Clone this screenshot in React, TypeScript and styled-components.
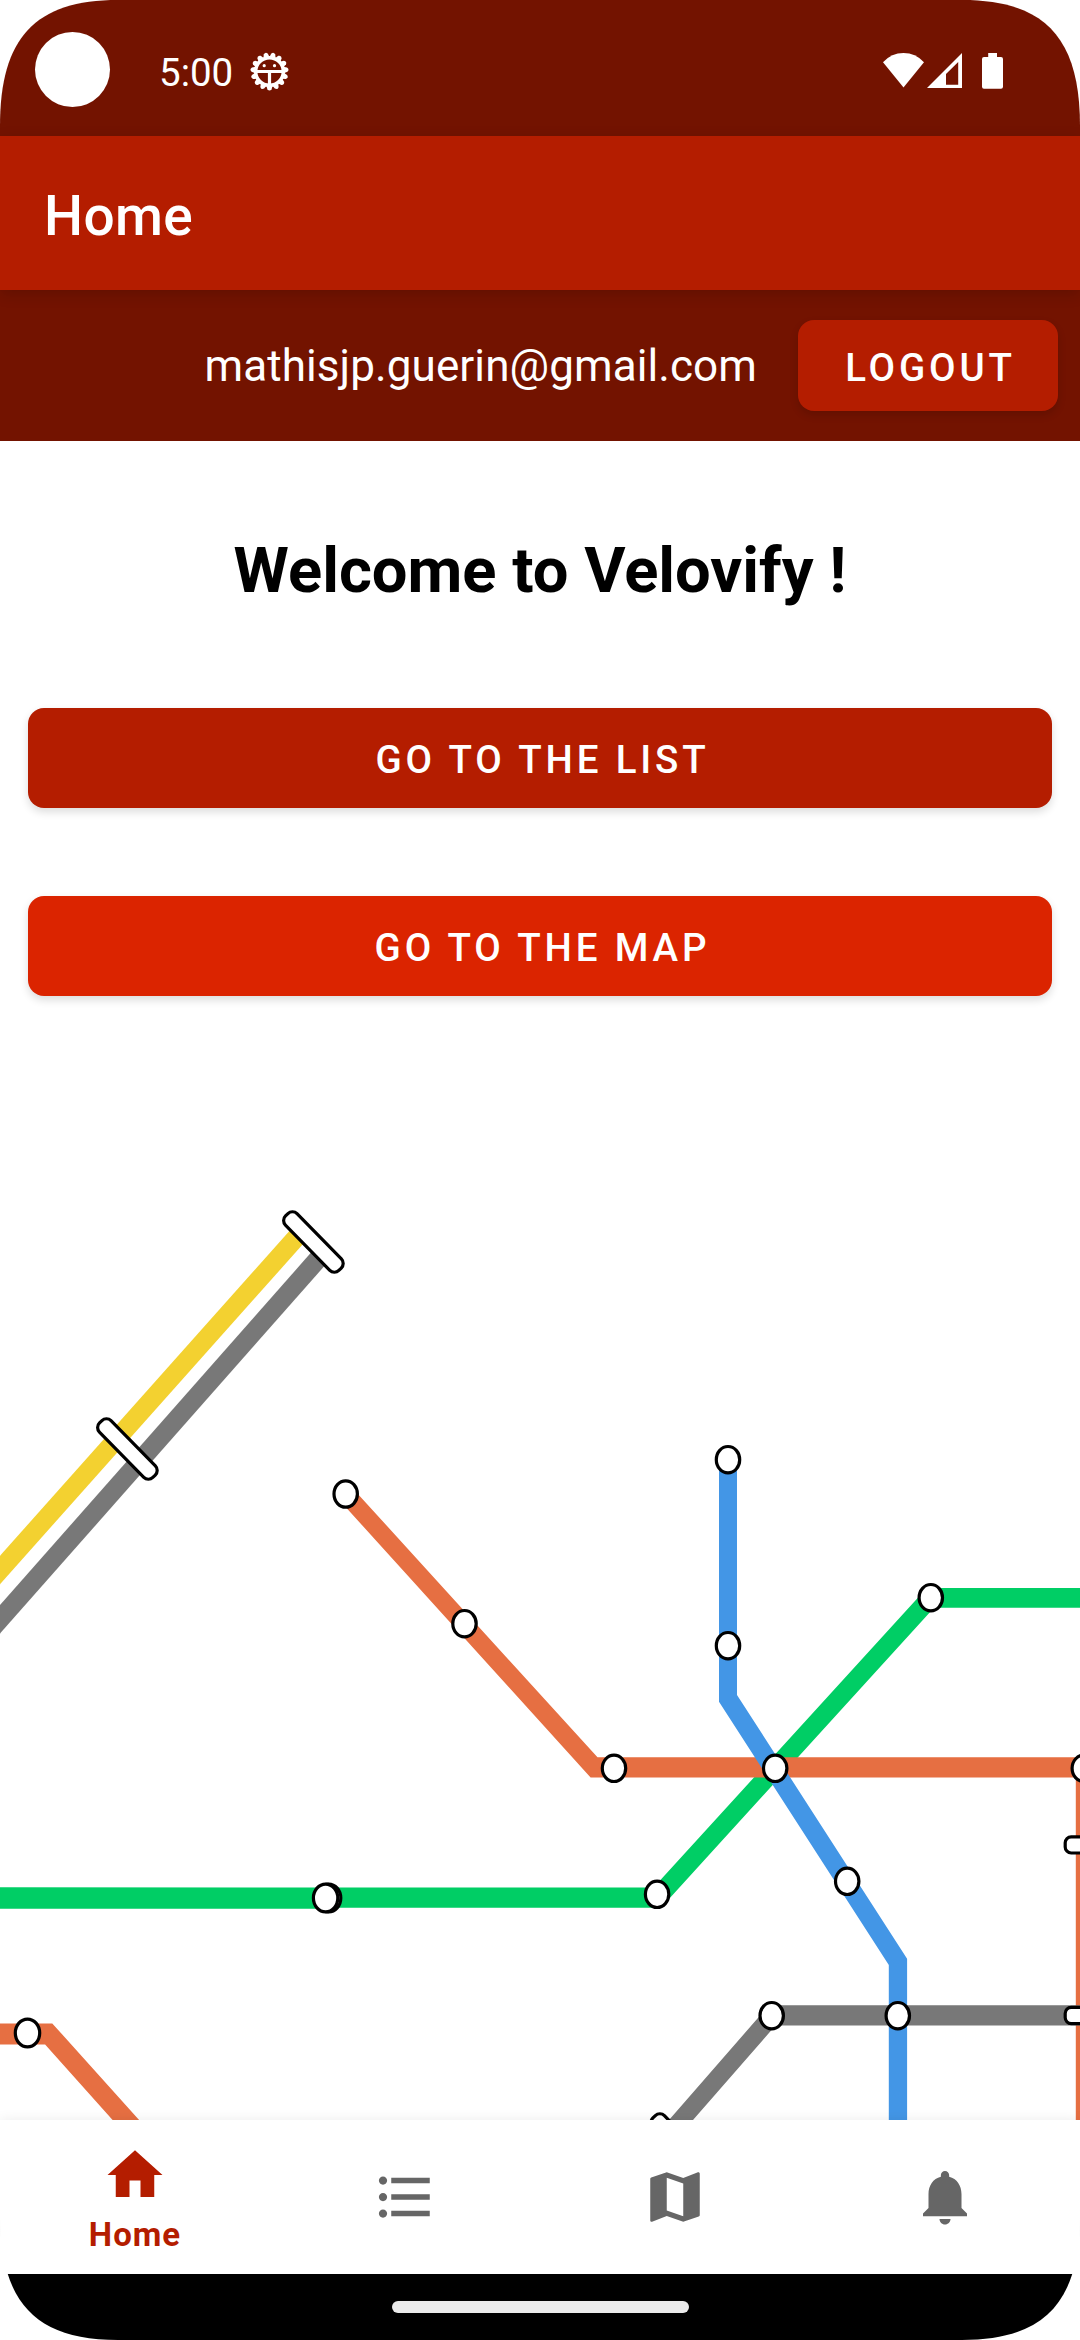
import React from "react";
import styled, { createGlobalStyle } from "styled-components";
import { MdFormatListBulleted, MdHome, MdMap } from "react-icons/md";

const GlobalStyle = createGlobalStyle`
  * { box-sizing: border-box; }
  body { margin: 0; background: #fff; font-family: Roboto, "Liberation Sans", sans-serif; }
`;

const colors = { primary: "#b41d00", dark: "#731300", bright: "#db2400", muted: "#666666" };

const Screen = styled.div`
  width: 1080px;
  height: 2340px;
  display: flex;
  flex-direction: column;
  overflow: hidden;
  background: #fff;
  clip-path: path("M118 0C35 0 0 38 0 126V2214C0 2302 35 2340 118 2340H962C1045 2340 1080 2302 1080 2214V126C1080 38 1045 0 962 0Z");
`;

const StatusBar = styled.header`
  height: 136px;
  flex: none;
  display: flex;
  align-items: flex-start;
  padding: 32px 77px 0 35px;
  background: ${colors.dark};
  color: #fff;
`;

const Camera = styled.div`
  width: 75px;
  height: 75px;
  border-radius: 50%;
  background: #fff;
`;

const Clock = styled.time`
  margin: 17px 0 0 49px;
  width: 91px;
  font-size: 38.5px;
  line-height: 48px;
`;

const StatusIcon = styled.svg<{ $gap: number; $top: number }>`
  flex: none;
  margin: ${(p) => p.$top}px 0 0 ${(p) => p.$gap}px;
`;

const StatusIcons = styled.div`
  margin-left: auto;
  display: flex;
`;

const AppBar = styled.div`
  height: 154px;
  flex: none;
  display: flex;
  align-items: center;
  padding: 6px 44px 0;
  background: ${colors.primary};
  position: relative;
  z-index: 1;
  box-shadow: 0 4px 14px rgba(0, 0, 0, 0.16);
`;

const Title = styled.h1`
  margin: 0;
  color: #fff;
  font-size: 55px;
  font-weight: 500;
  line-height: 64px;
  letter-spacing: 0.4px;
`;

const AccountBar = styled.div`
  height: 151px;
  flex: none;
  display: flex;
  align-items: center;
  justify-content: flex-end;
  gap: 41px;
  padding-right: 22px;
  background: ${colors.dark};
`;

const Email = styled.span`
  color: #fff;
  font-size: 44px;
  line-height: 52px;
  letter-spacing: 0.1px;
`;

const Button = styled.button<{ $color?: string; $height: number; $width?: number }>`
  width: ${(p) => (p.$width ? `${p.$width}px` : "100%")};
  height: ${(p) => p.$height}px;
  padding: 3px 0 0;
  border: 0;
  border-radius: 16px;
  background: ${(p) => p.$color ?? colors.primary};
  color: #fff;
  font-family: inherit;
  font-size: 38.5px;
  font-weight: 500;
  letter-spacing: 3.85px;
  text-indent: 5px;
  box-shadow: 0 4px 8px rgba(0, 0, 0, 0.14);
`;

const Content = styled.main`
  flex: 1;
  min-height: 0;
  display: flex;
  flex-direction: column;
`;

const Welcome = styled.h2`
  margin: 91px 0 0;
  text-align: center;
  color: #000;
  font-size: 63.25px;
  font-weight: 700;
  line-height: 76px;
`;

const Actions = styled.div`
  display: flex;
  flex-direction: column;
  gap: 88px;
  padding: 100px 28px 0;
`;

const Network = styled.svg`
  display: block;
  flex: none;
  margin-top: auto;
`;

const BottomNav = styled.nav`
  height: 154px;
  flex: none;
  display: grid;
  grid-template-columns: repeat(4, 1fr);
  background: #fff;
  position: relative;
  z-index: 1;
  box-shadow: 0 0 12px rgba(0, 0, 0, 0.08);
`;

const NavItem = styled.a<{ $active?: boolean }>`
  display: flex;
  flex-direction: column;
  align-items: center;
  justify-content: ${(p) => (p.$active ? "flex-start" : "center")};
  padding-top: ${(p) => (p.$active ? 22 : 0)}px;
  color: ${(p) => (p.$active ? colors.primary : colors.muted)};
`;

const NavLabel = styled.span`
  margin-top: 7px;
  font-size: 33px;
  font-weight: 700;
  line-height: 40px;
  letter-spacing: 1px;
`;

const GestureBar = styled.footer`
  height: 66px;
  flex: none;
  display: flex;
  justify-content: center;
  padding-top: 27px;
  background: #000;
`;

const Handle = styled.div`
  width: 297px;
  height: 12px;
  border-radius: 6px;
  background: #ebebeb;
`;

const teeth = Array.from({ length: 15 }, (_, i) => i * 24 + 12);

function GearIcon() {
  return (
    <StatusIcon $gap={0} $top={20} width="39" height="39" viewBox="-19.5 -19.5 39 39">
      {teeth.map((a) => (
        <path key={a} d="M-3.2 -14L-2.1 -17.8Q0 -20.4 2.1 -17.8L3.2 -14Z" fill="#fff" transform={`rotate(${a})`} />
      ))}
      <circle r="13.8" fill="none" stroke="#fff" strokeWidth="3.4" />
      <path d="M-13 0H13M0 0V14" fill="none" stroke="#fff" strokeWidth="3.2" />
      <circle cx="-5.3" cy="-5.8" r="1.6" fill="#fff" />
      <circle cx="5" cy="-5.8" r="1.6" fill="#fff" />
    </StatusIcon>
  );
}

type Stop = [number, number];
const stops: Stop[] = [
  [345.7, 1494], [464.5, 1623.7], [614, 1768.3], [775.2, 1768.3], [1083.8, 1768.3],
  [728, 1459.7], [728, 1645.7], [847.2, 1881.3], [897.8, 2015.7],
  [930.8, 1597.7], [657.1, 1894.3], [771.7, 2015.7],
];
const largeStops: Stop[] = [[328.6, 1898], [325.6, 1898], [27.5, 2033]];
const interchanges: Stop[] = [[313.4, 1242], [127.4, 1449], [680.8, 2144]];

function NetworkMap() {
  return (
    <Network width="1080" height="980" viewBox="0 1140 1080 980">
      <path d="M-20 1592.4L302 1231" stroke="#f3d130" strokeWidth="18.9" />
      <path d="M-20 1642L321 1255.6" stroke="#787878" strokeWidth="18.9" />
      <path d="M0 1887.3L653.6 1887.5L926.8 1588H1080V1607.8H934L661 1907.7H326V1908.7H0Z" fill="#00ce65" />
      <path d="M351 1486.4L597.5 1757.3H1080V1777.5H590.6L339 1499.7Z" fill="#e66f42" />
      <path d="M1075.8 1767H1080V2120H1075.8Z" fill="#e66f42" />
      <path d="M0 2023.4H52.3L139.1 2120H112.6L45.1 2044.6H0Z" fill="#e66f42" />
      <path d="M719 1460H737V1695L907.1 1958.7V2120H888.8V1965L719 1701.7Z" fill="#4396e6" />
      <path d="M669 2120H693L775.5 2025.5H1080V2005.3H769Z" fill="#787878" />
      <g fill="#fff" stroke="#000" strokeWidth="3.2">
        {interchanges.map(([x, y]) => (
          <rect key={x} x={-38.1} y={-8.1} width="76.2" height="16.2" rx="6.4" transform={`translate(${x} ${y}) rotate(45.6)`} />
        ))}
        {stops.map(([x, y]) => (
          <ellipse key={`${x}-${y}`} cx={x} cy={y} rx="11.7" ry="13.2" />
        ))}
        {largeStops.map(([x, y]) => (
          <ellipse key={`${x}-${y}`} cx={x} cy={y} rx="12.2" ry="13.9" />
        ))}
        <rect x="1065.2" y="1836.8" width="40" height="16.2" rx="6" />
        <rect x="1065.2" y="2007.4" width="40" height="16.2" rx="6" />
      </g>
    </Network>
  );
}

export default function App() {
  return (
    <>
      <GlobalStyle />
      <Screen>
        <StatusBar>
          <Camera />
          <Clock>5:00</Clock>
          <GearIcon />
          <StatusIcons>
            <StatusIcon $gap={0} $top={21} width="41" height="35" viewBox="0 0 41 35">
              <path d="M0 9.2Q8.5 0 20.5 0T41 9.2L20.5 34.5Z" fill="#fff" />
            </StatusIcon>
            <StatusIcon $gap={3} $top={21} width="35" height="35" viewBox="0 0 35 35">
              <path fillRule="evenodd" d="M0 35L35 0V35ZM19 21V31.7H31.2V9Z" fill="#fff" />
            </StatusIcon>
            <StatusIcon $gap={20} $top={21} width="21" height="36" viewBox="0 0 21 36">
              <path d="M6.2 0H15V4H19Q21 4 21 6V33.7Q21 35.7 19 35.7H2Q0 35.7 0 33.7V6Q0 4 2 4H6.2Z" fill="#fff" />
            </StatusIcon>
          </StatusIcons>
        </StatusBar>
        <AppBar>
          <Title>Home</Title>
        </AppBar>
        <AccountBar>
          <Email>mathisjp.guerin@gmail.com</Email>
          <Button $width={260} $height={91}>LOGOUT</Button>
        </AccountBar>
        <Content>
          <Welcome>Welcome to Velovify !</Welcome>
          <Actions>
            <Button $height={100}>GO TO THE LIST</Button>
            <Button $height={100} $color={colors.bright}>GO TO THE MAP</Button>
          </Actions>
          <NetworkMap />
        </Content>
        <BottomNav>
          <NavItem $active>
            <MdHome size={66} />
            <NavLabel>Home</NavLabel>
          </NavItem>
          <NavItem>
            <MdFormatListBulleted size={66} />
          </NavItem>
          <NavItem>
            <MdMap size={66} />
          </NavItem>
          <NavItem>
            <svg width="66" height="66" viewBox="0 0 24 24" fill="currentColor">
              <path d="M12 22c1.1 0 2-.9 2-2h-4c0 1.1.89 2 2 2zm6-6v-5c0-3.07-1.64-5.64-4.5-6.32V4c0-.83-.67-1.5-1.5-1.5s-1.5.67-1.5 1.5v.68C7.63 5.36 6 7.92 6 11v5l-2 2v1h16v-1l-2-2z" />
            </svg>
          </NavItem>
        </BottomNav>
        <GestureBar>
          <Handle />
        </GestureBar>
      </Screen>
    </>
  );
}
